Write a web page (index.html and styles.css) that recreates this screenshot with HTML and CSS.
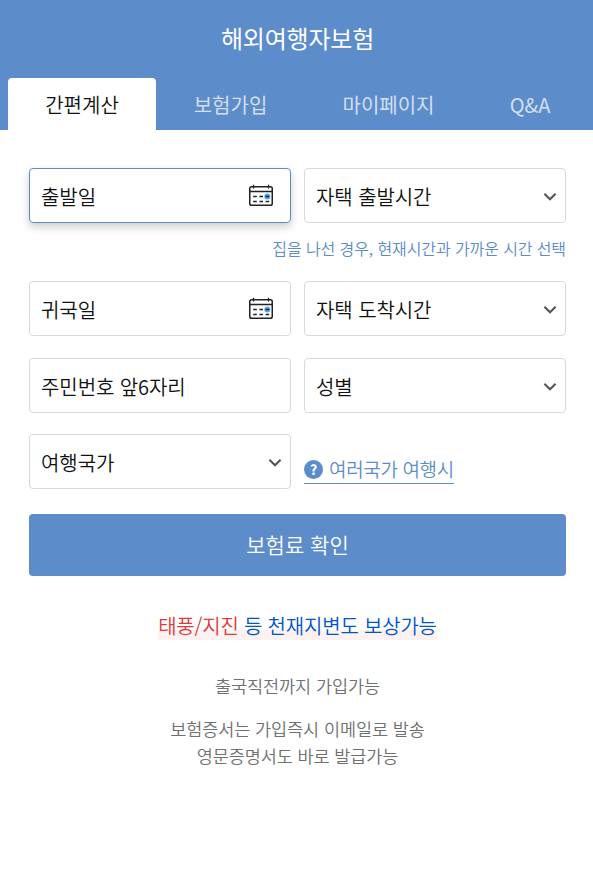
FILE: index.html
```html
<!DOCTYPE html>
<html lang="ko">
<head>
<meta charset="utf-8">
<title>해외여행자보험</title>
<link rel="stylesheet" href="styles.css">
</head>
<body>
<svg width="0" height="0" class="defs">
  <symbol id="calendar" viewBox="0 0 24 23">
    <circle cx="18.3" cy="12.5" r="3" fill="#55a8ee"/>
    <rect x=".75" y="2.75" width="22.5" height="18.5" rx="1.8" fill="none" stroke="#222" stroke-width="1.5"/>
    <path d="M1 7.5H23M4.5 .8V4.5M19.5 .8V4.5" fill="none" stroke="#222" stroke-width="1.3"/>
    <path d="M4.2 12.5H7.8M10.4 12.5H14M16.6 12.5H20.2M4.2 17.5H7.8M10.4 17.5H14M16.6 17.5H20.2" fill="none" stroke="#222" stroke-width="1.4"/>
  </symbol>
  <symbol id="chevron" viewBox="0 0 14 10">
    <path d="M1.4 1.8 7 7.2 12.6 1.8" fill="none" stroke="#555" stroke-width="2.1"/>
  </symbol>
</svg>
<header class="header">
  <h1 class="title">해외여행자보험</h1>
  <nav class="tabs">
    <a class="tab tab-calc active">간편계산</a>
    <a class="tab tab-join">보험가입</a>
    <a class="tab tab-my">마이페이지</a>
    <a class="tab tab-qna">Q&amp;A</a>
  </nav>
</header>
<main class="main">
  <div class="row">
    <div class="field focused"><span>출발일</span><svg class="calendar"><use href="#calendar"/></svg></div>
    <div class="field"><span>자택 출발시간</span><svg class="chevron"><use href="#chevron"/></svg></div>
  </div>
  <p class="note">집을 나선 경우, 현재시간과 가까운 시간 선택</p>
  <div class="row row-return">
    <div class="field"><span>귀국일</span><svg class="calendar"><use href="#calendar"/></svg></div>
    <div class="field"><span>자택 도착시간</span><svg class="chevron"><use href="#chevron"/></svg></div>
  </div>
  <div class="row row-person">
    <div class="field"><span>주민번호 앞6자리</span></div>
    <div class="field"><span>성별</span><svg class="chevron"><use href="#chevron"/></svg></div>
  </div>
  <div class="row row-country">
    <div class="field"><span>여행국가</span><svg class="chevron"><use href="#chevron"/></svg></div>
    <a class="help"><span class="help-icon">?</span><span>여러국가 여행시</span></a>
  </div>
  <button class="submit">보험료 확인</button>
  <p class="headline"><span class="mark"><em>태풍/지진</em> 등 천재지변도 보상가능</span></p>
  <p class="info">출국직전까지 가입가능</p>
  <p class="info info-mail">보험증서는 가입즉시 이메일로 발송<br>영문증명서도 바로 발급가능</p>
</main>
</body>
</html>
```

FILE: styles.css
```css
* { box-sizing: border-box; }
body {
  margin: 0;
  background: #fff;
  color: #111;
  font-family: "Noto Sans CJK KR", sans-serif;
  font-size: 20px;
  font-weight: 350;
}
p, h1 { margin: 0; }
.defs { display: block; }
.header { height: 130px; background: #5c8dca; }
.title {
  height: 78px;
  padding-left: 2px;
  color: #fff;
  font-size: 24px;
  font-weight: 400;
  line-height: 76px;
  text-align: center;
  letter-spacing: -.2px;
}
.tabs { display: flex; height: 52px; padding-left: 8px; }
.tab { flex-shrink: 0; color: #d2dff0; line-height: 53px; text-align: center; font-weight: 400; }
.tab-calc { width: 148px; }
.tab-join { width: 149px; }
.tab-my { width: 167px; }
.tab-qna { width: 116px; }
.tab.active { background: #fff; color: #111; border-radius: 4px 4px 0 0; font-weight: 350; }
.main { padding: 38px 27px 0 29px; }
.row { display: grid; grid-template-columns: 262px 262px; column-gap: 13px; }
.field {
  display: flex;
  align-items: center;
  justify-content: space-between;
  height: 55px;
  padding: 2px 9px 0 11px;
  border: 1px solid #d9d9d9;
  border-radius: 4px;
  line-height: 30px;
  letter-spacing: -.08px;
}
.focused { border-color: #5c8dca; box-shadow: 0 4px 8px rgba(0, 0, 0, .2); }
.calendar { width: 24px; height: 23px; margin: 0 8px 3px 0; }
.chevron { width: 14px; height: 10px; margin: 1px -.5px 0 0; }
.note {
  height: 58px;
  padding-top: 10px;
  color: #5c8dca;
  font-size: 16px;
  line-height: 30px;
  letter-spacing: -.1px;
  text-align: right;
}
.row-person { margin-top: 22px; }
.row-country { margin-top: 21px; }
.help {
  display: flex;
  align-items: center;
  align-self: end;
  justify-self: start;
  gap: 6px;
  width: 150px;
  height: 29px;
  margin-bottom: 5px;
  border-bottom: 1px solid #5c8dca;
  color: #5c8dca;
  font-size: 19px;
  line-height: 28px;
  letter-spacing: -.35px;
  white-space: nowrap;
}
.help-icon {
  width: 19px;
  height: 19px;
  border-radius: 50%;
  background: #5c8dca;
  color: #fff;
  font-size: 14px;
  font-weight: 700;
  line-height: 18px;
  letter-spacing: 0;
  text-align: center;
}
.submit {
  display: block;
  width: 100%;
  height: 62px;
  margin-top: 25px;
  padding: 0 0 2px;
  border: 0;
  border-radius: 4px;
  background: #5c8dca;
  color: #fff;
  font: 350 21px/60px "Noto Sans CJK KR", sans-serif;
}
.headline { margin-top: 35px; color: #0055c8; line-height: 30px; letter-spacing: -.2px; text-align: center; }
.mark { display: inline-block; background: linear-gradient(transparent 19px, #fdf1f1 19px 29px, transparent 29px); }
.headline em { color: #e03a3a; font-style: normal; }
.info { margin-top: 31px; color: #707070; font-size: 17.5px; line-height: 27px; letter-spacing: -.1px; text-align: center; }
.info-mail { margin-top: 16px; }
```
